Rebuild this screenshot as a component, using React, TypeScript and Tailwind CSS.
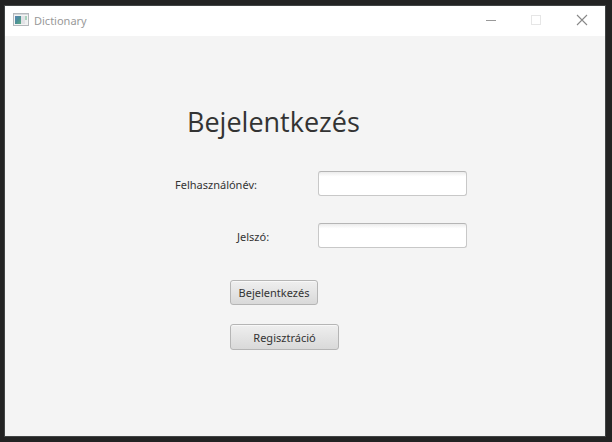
import type { ReactNode } from "react";

function AppIcon() {
  return (
    <svg width="16" height="14" viewBox="0 0 16 14" aria-hidden="true" shapeRendering="crispEdges">
      <defs>
        <linearGradient id="pane" x1="0" y1="0" x2="1" y2="1">
          <stop offset="0" stopColor="#5a83b5" />
          <stop offset="0.5" stopColor="#4b9097" />
          <stop offset="1" stopColor="#63ad83" />
        </linearGradient>
      </defs>
      <rect x="0.5" y="0.5" width="15" height="12" fill="#f4f4f4" stroke="#b4b8bc" />
      <rect x="1" y="1" width="14" height="1" fill="#d6d9dc" />
      <rect x="2" y="3" width="6" height="8" fill="url(#pane)" />
      <rect x="8" y="3" width="4" height="8" fill="#e2e2e6" />
      <rect x="12" y="3" width="2" height="4" fill="#a9d3bd" />
      <rect x="12" y="7" width="2" height="4" fill="#eef1f1" />
    </svg>
  );
}

function CaptionButton({ label, disabled, children }: { label: string; disabled?: boolean; children: ReactNode }) {
  return (
    <button type="button" aria-label={label} disabled={disabled} className="flex h-7 w-[46px] items-center justify-center">
      <svg width="12" height="12" viewBox="0 0 12 12" fill="none" aria-hidden="true">
        {children}
      </svg>
    </button>
  );
}

const inputClass =
  "h-[25px] w-full rounded-[3px] border border-[#c8c8c8] border-t-[#b5b5b5] bg-linear-to-b from-[#ececec] to-white to-20% px-2 text-xs outline-none";
const buttonClass =
  "rounded-[3px] border border-[#b5b5b5] bg-linear-to-b from-[#efefef] to-[#d9d9d9] pt-0.5 text-center text-[11px] shadow-[inset_0_1px_0_#f8f8f8]";

export default function App() {
  return (
    <div className="flex min-h-screen flex-col bg-[#232323] py-[5px] pr-[6px] pl-1 font-['Noto_Sans','Open_Sans',sans-serif] text-[#333333]">
      <div className="flex grow flex-col border border-[#414444] bg-[#f4f4f4]">
        <header className="flex h-[30px] shrink-0 items-start bg-white pl-2">
          <div className="flex h-7 grow items-center gap-[5px] text-[11px] text-[#999999]">
            <AppIcon />
            <span className="pt-0.5">Dictionary</span>
          </div>
          <CaptionButton label="Minimize">
            <path d="M2 6.5H12" stroke="#999999" />
          </CaptionButton>
          <CaptionButton label="Maximize" disabled>
            <rect x="1.5" y="1.5" width="9" height="9" stroke="#e6e6e6" />
          </CaptionButton>
          <CaptionButton label="Close">
            <path d="M1 1L11 11M11 1L1 11" stroke="#888888" strokeWidth="1.1" />
          </CaptionButton>
        </header>
        <main className="pt-[66px] pl-[170px]">
          <h1 className="pl-3 font-['Open_Sans','Noto_Sans',sans-serif] text-[27px] leading-[40px]">Bejelentkezés</h1>
          <form className="pt-[29px]" onSubmit={(e) => e.preventDefault()}>
            <div className="grid grid-cols-[143px_149px] items-center gap-y-[27px]">
              <label htmlFor="user" className="pt-1 text-[11px]">Felhasználónév:</label>
              <input id="user" type="text" className={inputClass} />
              <label htmlFor="password" className="pt-1 pl-[62px] text-[11px]">Jelszó:</label>
              <input id="password" type="password" className={inputClass} />
            </div>
            <div className="flex flex-col items-start gap-[19px] pt-8 pl-[55px]">
              <button type="submit" className={`${buttonClass} h-[25px] w-[88px]`}>Bejelentkezés</button>
              <button type="button" className={`${buttonClass} h-[26px] w-[109px]`}>Regisztráció</button>
            </div>
          </form>
        </main>
      </div>
    </div>
  );
}
